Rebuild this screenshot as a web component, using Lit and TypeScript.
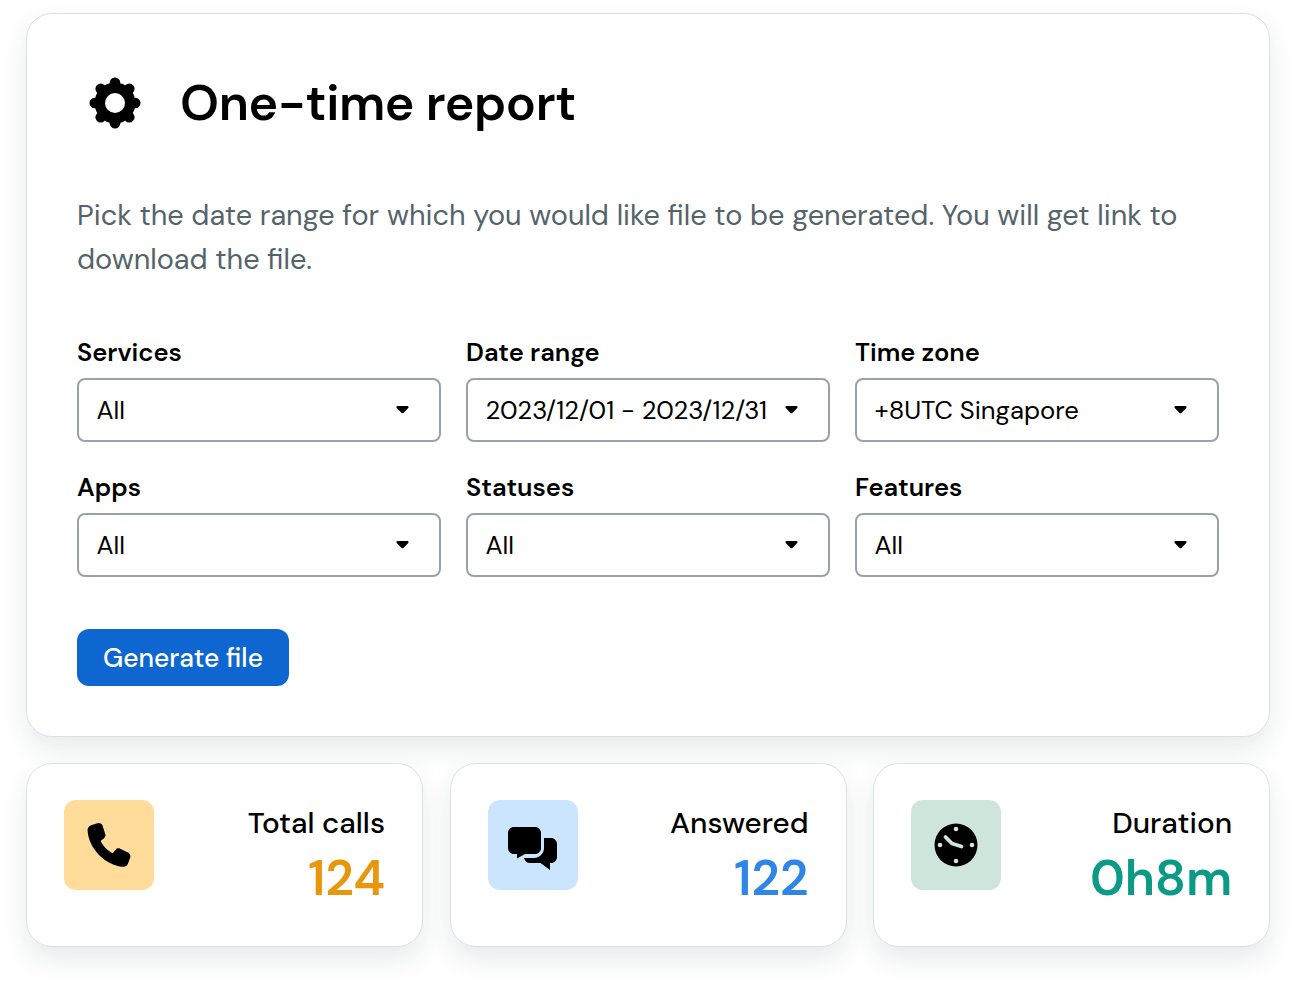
import { LitElement, html, css, svg } from "lit";
import { customElement } from "lit/decorators.js";

const lobes = Array.from({ length: 8 }, (_, i) => {
  const t = (i / 8) * Math.PI * 2;
  return svg`<circle cx=${(26 + 20.2 * Math.sin(t)).toFixed(2)} cy=${(26 - 20.2 * Math.cos(t)).toFixed(2)} r="5.300"/>`;
});
const gear = html`<svg class="gear" viewBox="0 0 52 52" aria-hidden="true"><g fill="#000"><circle cx="26" cy="26" r="20.500"/>${lobes}</g><circle cx="26" cy="26" r="10" fill="#fff"/></svg>`;
const phone = html`<svg class="ic phone" viewBox="0.3 1.200 21.800 22.400" aria-hidden="true"><path fill="#000" d="M5.300 1.300 2.100 2.300C.9 2.700.2 3.800.3 5c.5 9.200 9.100 17.800 17.900 18.500 1.200.1 2.300-.6 2.700-1.700l1.100-3.100c.3-.9-.1-1.800-.9-2.300l-4.200-2.100c-.8-.4-1.700-.2-2.300.5l-1.500 1.800c-2.700-1.300-4.800-3.400-6.200-6.200l1.800-1.500c.7-.6.900-1.500.5-2.300L7.800 2.200c-.5-.8-1.600-1.200-2.500-.9Z"/></svg>`;
const chat = html`<svg class="ic chat" viewBox="0 0 49 43" aria-hidden="true"><path fill="#000" d="M6 0h21c3.300 0 6 2.700 6 6v15c0 3.300-2.700 6-6 6H17l-8 4.500V27H6c-3.300 0-6-2.700-6-6V6c0-3.300 2.700-6 6-6Z"/><path fill="#000" d="M36 11h7c3.300 0 6 2.700 6 6v13c0 3.300-2.700 6-6 6h-1v7l-9.500-7H22c-3 0-5.300-2-6-5h10c5.500 0 10-4.500 10-10V11Z"/></svg>`;
const clock = html`<svg class="ic clock" viewBox="0 0 44 44" aria-hidden="true"><circle cx="22" cy="22" r="21.500" fill="#000"/><g fill="#cde5db"><circle cx="22" cy="6" r="2.300"/><circle cx="22" cy="38" r="2.300"/><circle cx="6" cy="22" r="2.300"/><circle cx="38" cy="22" r="2.300"/></g><path fill="none" stroke="#cde5db" stroke-width="3.800" stroke-linecap="round" stroke-linejoin="round" d="M11.500 14 18 20.500 27.500 23.500"/></svg>`;

const fields = [
  ["Services", "All"],
  ["Date range", "2023/12/01 - 2023/12/31"],
  ["Time zone", "+8UTC Singapore"],
  ["Apps", "All"],
  ["Statuses", "All"],
  ["Features", "All"],
];
const stats = [
  { label: "Total calls", value: "124", tone: "orange", icon: phone },
  { label: "Answered", value: "122", tone: "blue", icon: chat },
  { label: "Duration", value: "0h8m", tone: "green", icon: clock },
];

@customElement("app-root")
export class AppRoot extends LitElement {
  static styles = css`
    :host { display: block; width: 1296px; height: 987px; box-sizing: border-box; padding: 13px 26px 0; background: #fff; font-family: "DM Sans", Inter, "Noto Sans", sans-serif; color: #000; overflow: hidden; }
    .card { box-sizing: border-box; background: #fff; border: 1.500px solid #dbe2e6; box-shadow: 0 12px 26px rgba(30, 50, 60, 0.10); }
    .main { height: 724px; border-radius: 26px; padding: 0 50px; display: flex; flex-direction: column; align-items: flex-start; }
    .head { display: flex; align-items: center; height: 52px; margin: 63px 0 0 12px; gap: 39px; }
    .gear { width: 52px; height: 52px; display: block; }
    h1 { margin: 0; font-size: 50px; font-weight: 600; line-height: 52px; letter-spacing: -0.4px; white-space: nowrap; }
    p { margin: 64px 0 0; width: 1130px; font-size: 28.860px; line-height: 44px; color: #55636b; }
    .grid { display: grid; grid-template-columns: repeat(3, 363.500px); column-gap: 25.500px; row-gap: 30px; margin-top: 56px; }
    .field { display: flex; flex-direction: column; gap: 9px; }
    label { font-size: 25.500px; font-weight: 600; line-height: 32px; }
    .select { box-sizing: border-box; height: 64px; border: 2px solid #97a3a5; border-radius: 8px; padding: 0 30px 0 17.500px; display: flex; align-items: center; justify-content: space-between; font-size: 25.700px; white-space: nowrap; }
    .caret { width: 13px; height: 8px; display: block; flex: none; }
    button { margin-top: 52px; width: 212px; height: 57px; border: 0; border-radius: 12px; background: #0e66d0; color: #fff; font: 500 26.400px "DM Sans", Inter, "Noto Sans", sans-serif; padding: 0; }
    .stats { display: grid; grid-template-columns: repeat(3, 397px); column-gap: 26.500px; margin-top: 26px; }
    .stat { height: 184px; border-radius: 26px; padding: 36px 37px 0 37px; display: flex; justify-content: space-between; align-items: flex-start; }
    .tile { width: 90px; height: 90px; border-radius: 12px; display: flex; align-items: center; justify-content: center; }
    .orange .tile { background: #ffdc9a; }
    .blue .tile { background: #cce5ff; }
    .green .tile { background: #cde5db; }
    .phone { width: 44px; height: 44px; }
    .chat { width: 49px; height: 43px; margin-top: 6px; }
    .clock { width: 44px; height: 44px; }
    .txt { text-align: right; display: flex; flex-direction: column; padding-top: 1px; }
    .lbl { font-size: 29.600px; font-weight: 500; line-height: 44px; }
    .val { font-size: 50px; font-weight: 600; line-height: 64px; padding-top: 1px; letter-spacing: -0.2px; }
    .orange .val { color: #e8960c; }
    .blue .val { color: #2f86e8; }
    .green .val { color: #0a9a86; }
  `;

  render() {
    return html`
      <section class="card main">
        <div class="head">${gear}<h1>One-time report</h1></div>
        <p>Pick the date range for which you would like file to be generated. You will get link to download the file.</p>
        <div class="grid">
          ${fields.map(([l, v]) => html`<div class="field"><label>${l}</label><div class="select"><span>${v}</span><svg class="caret" viewBox="0 0 14 9" aria-hidden="true"><path fill="#000" d="M1.500 0h11c1.200 0 1.800 1.400 1 2.200L8 7.800c-.6.600-1.400.6-2 0L.5 2.200C-.3 1.400.3 0 1.500 0Z"/></svg></div></div>`)}
        </div>
        <button>Generate file</button>
      </section>
      <div class="stats">
        ${stats.map((s) => html`<div class="card stat ${s.tone}"><div class="tile">${s.icon}</div><div class="txt"><span class="lbl">${s.label}</span><span class="val">${s.value}</span></div></div>`)}
      </div>
    `;
  }
}
